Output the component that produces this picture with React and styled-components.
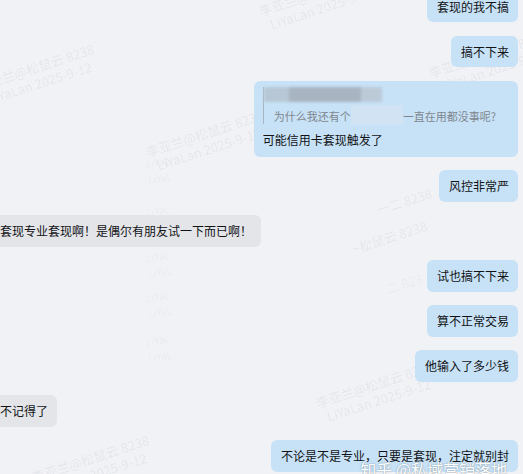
import React from 'react';
import styled, { createGlobalStyle } from 'styled-components';

const GlobalStyle = createGlobalStyle`
  html, body {
    margin: 0;
    padding: 0;
    background: #f1f2f6;
    overflow: hidden;
  }
  body {
    font-family: "Noto Sans CJK SC", "Noto Sans", sans-serif;
  }
`;

const Screen = styled.div`
  position: relative;
  width: 523px;
  height: 474px;
  overflow: hidden;
  background: #f1f2f6;
`;

const Feed = styled.div`
  position: relative;
  z-index: 1;
  display: flex;
  flex-direction: column;
  gap: 13.5px;
  margin-top: -9.5px;
`;

const Row = styled.div`
  display: flex;
  justify-content: ${(p) => (p.$mine ? 'flex-end' : 'flex-start')};
  padding-right: 5px;
`;

const Bubble = styled.div`
  padding: 8px 9px 8px 10px;
  margin-left: ${(p) => (p.$mine ? '0' : '-10px')};
  font-size: 12px;
  line-height: 15.5px;
  color: #121315;
  white-space: nowrap;
  border-radius: 6px;
  background: ${(p) => (p.$mine ? '#c7e2f7' : '#e3e5e9')};
`;

const QuoteBubble = styled(Bubble)`
  padding: 6px 22px 9.5px 9px;
`;

const Quote = styled.div`
  border-left: 1px solid #a9b6c2;
`;

const QuoteAuthor = styled.div`
  display: flex;
  height: 15px;
  width: 118px;
  filter: blur(1.5px);
`;

const AuthorPatch = styled.span`
  flex: ${(p) => p.$grow};
  background: ${(p) => p.$tone};
`;

const QuoteText = styled.div`
  display: flex;
  align-items: center;
  padding: 7px 0 0 10px;
  font-size: 11px;
  line-height: 15px;
  color: #7f868d;
`;

const Redacted = styled.span`
  display: inline-block;
  width: 52px;
  height: 20px;
  margin: -4px 0 -1px;
  background: #d2e4f3;
  filter: blur(1px);
`;

const MainLine = styled.div`
  margin-top: 8px;
`;

const WatermarkLayer = styled.div`
  position: absolute;
  inset: 0;
  z-index: 0;
  pointer-events: none;
`;

const Watermark = styled.div`
  position: absolute;
  left: ${(p) => p.$x}px;
  top: ${(p) => p.$y}px;
  transform-origin: 0 0;
  transform: rotate(${(p) => p.$r ?? -18}deg);
  font-size: ${(p) => p.$size ?? 13}px;
  line-height: 16px;
  color: rgba(60, 66, 80, ${(p) => p.$a ?? 0.085});
  white-space: nowrap;
`;

const MarkLine = styled.div`
  padding-left: ${(p) => (p.$indent ? '6px' : '0')};
`;

const SiteMark = styled.div`
  position: absolute;
  z-index: 2;
  right: 16px;
  top: 460px;
  font-size: 16px;
  line-height: 18px;
  color: #ffffff;
  white-space: nowrap;
  text-shadow: 0 0 1px rgba(90, 100, 110, 0.55), 0 0 2px rgba(90, 100, 110, 0.35);
`;

const stamps = [
  { x: 257, y: 4 },
  { x: -25, y: 79 },
  { x: 144, y: 145 },
  { x: 427, y: 66 },
  { x: 314, y: 396 },
  { x: 30, y: 470 },
];

const fragments = [
  { x: 374, y: 203, text: '一二 8238' },
  { x: 350, y: 242, text: '~松鼠云 8238' },
  { x: 384, y: 282, text: '二 823', a: 0.06 },
];

const traces = [
  { x: 145, y: 156 },
  { x: 145, y: 204 },
  { x: 145, y: 250 },
  { x: 145, y: 290 },
  { x: 145, y: 334 },
];

const messages = [
  { mine: true, text: '套现的我不搞' },
  { mine: true, text: '搞不下来' },
  { mine: true, quote: true, text: '可能信用卡套现触发了' },
  { mine: true, text: '风控非常严' },
  { mine: false, text: '套现专业套现啊！是偶尔有朋友试一下而已啊！' },
  { mine: true, text: '试也搞不下来' },
  { mine: true, text: '算不正常交易' },
  { mine: true, text: '他输入了多少钱' },
  { mine: false, text: '不记得了' },
  { mine: true, text: '不论是不是专业，只要是套现，注定就别封' },
];

export default function App() {
  return (
    <Screen>
      <GlobalStyle />
      <WatermarkLayer>
        {stamps.map((s, i) => (
          <Watermark key={i} $x={s.x} $y={s.y}>
            <MarkLine>李亚兰@松鼠云 8238</MarkLine>
            <MarkLine $indent>LiYaLan 2025-9-12</MarkLine>
          </Watermark>
        ))}
        {fragments.map((f, i) => (
          <Watermark key={`f${i}`} $x={f.x} $y={f.y} $a={f.a}>
            {f.text}
          </Watermark>
        ))}
        {traces.map((t, i) => (
          <Watermark key={`t${i}`} $x={t.x} $y={t.y} $r={-8} $size={10} $a={0.07}>
            <MarkLine>LiYaL</MarkLine>
            <MarkLine>LiYaL</MarkLine>
          </Watermark>
        ))}
      </WatermarkLayer>

      <Feed>
        {messages.map((m, i) => (
          <Row key={i} $mine={m.mine}>
            {m.quote ? (
              <QuoteBubble $mine>
                <Quote>
                  <QuoteAuthor>
                    <AuthorPatch $grow={25} $tone="#b8c7d5" />
                    <AuthorPatch $grow={72} $tone="#a8b4c1" />
                    <AuthorPatch $grow={21} $tone="#bccad8" />
                  </QuoteAuthor>
                  <QuoteText>
                    为什么我还有个
                    <Redacted />
                    一直在用都没事呢?
                  </QuoteText>
                </Quote>
                <MainLine>{m.text}</MainLine>
              </QuoteBubble>
            ) : (
              <Bubble $mine={m.mine}>{m.text}</Bubble>
            )}
          </Row>
        ))}
      </Feed>

      <SiteMark>知乎 @私域营销落地</SiteMark>
    </Screen>
  );
}
